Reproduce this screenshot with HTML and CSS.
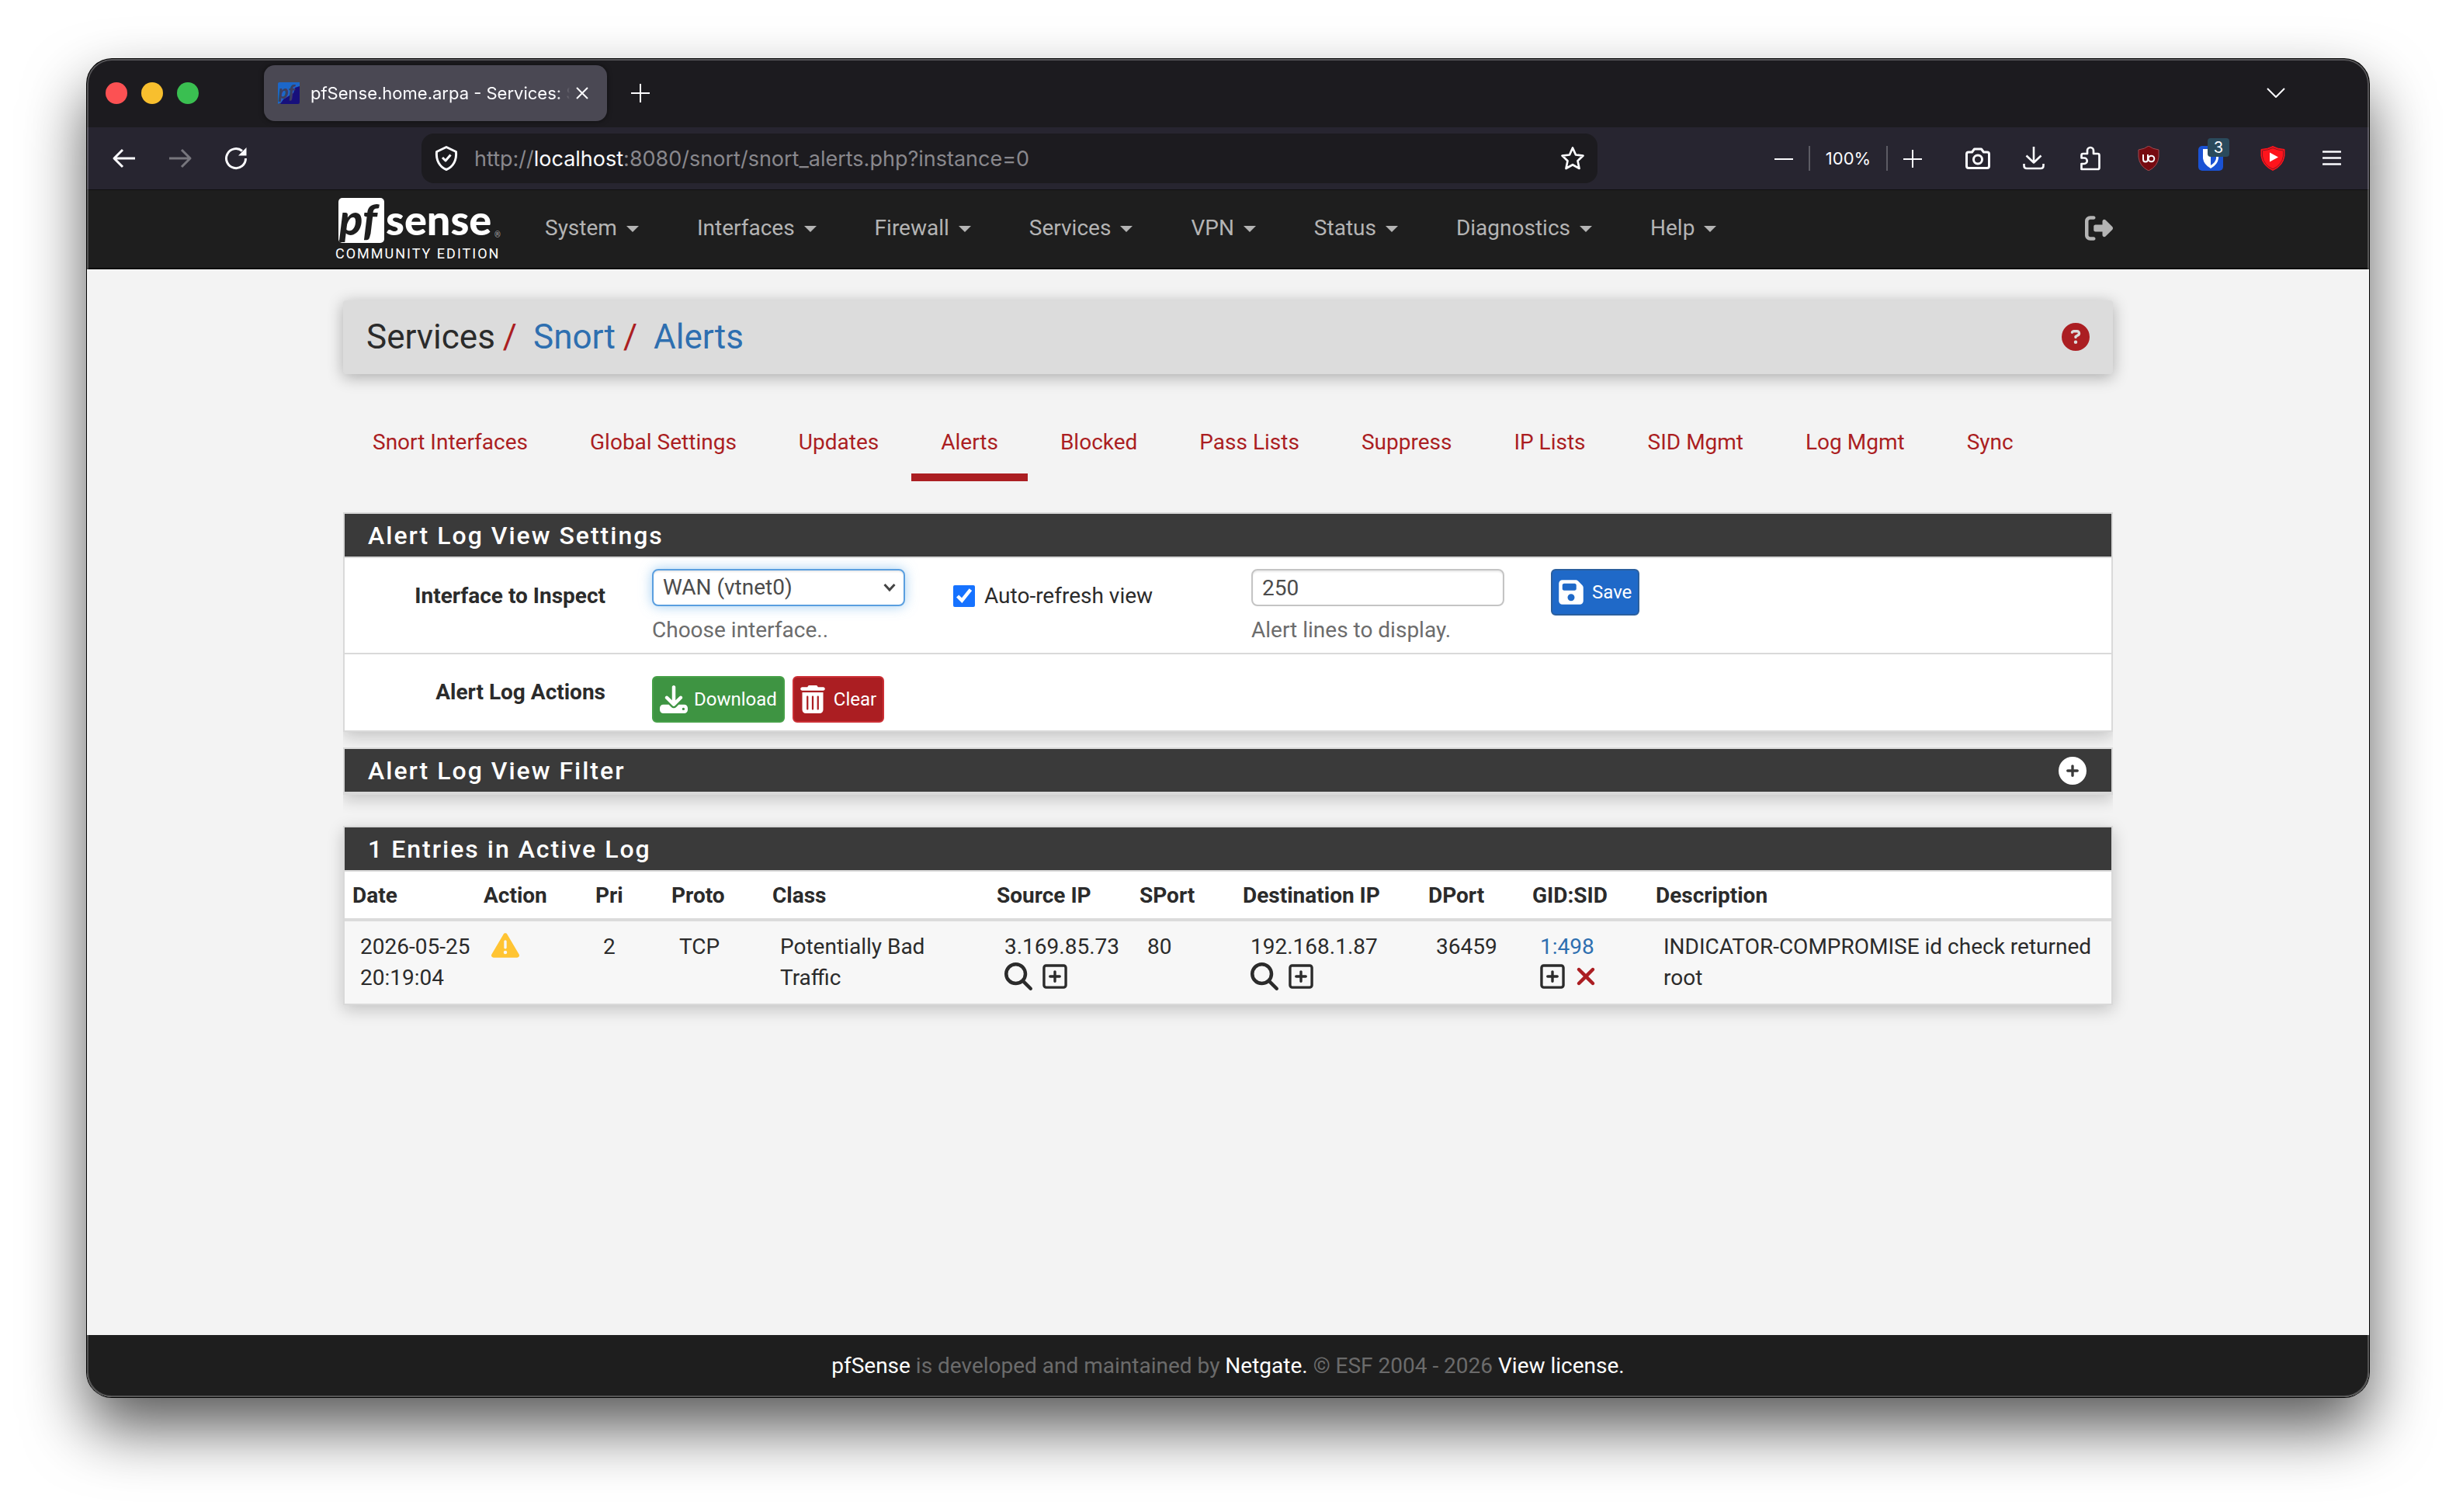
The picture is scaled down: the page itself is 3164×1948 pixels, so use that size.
FILE: index.html
```html
<!DOCTYPE html>
<html lang="en">
<head>
<meta charset="utf-8">
<meta name="viewport" content="width=device-width, initial-scale=1">
<title>pfSense.home.arpa - Services: Snort: Alerts</title>
<link rel="stylesheet" href="styles.css">
</head>
<body>
<svg class="sprite" aria-hidden="true">
  <symbol id="i-search" viewBox="0 0 512 512"><path d="M416 208c0 45.900-14.900 88.300-40 122.700L502.600 457.400c12.500 12.500 12.500 32.800 0 45.300s-32.800 12.500-45.300 0L330.700 376c-34.400 25.200-76.800 40-122.700 40C93.100 416 0 322.900 0 208S93.100 0 208 0S416 93.100 416 208zM208 352a144 144 0 1 0 0-288 144 144 0 1 0 0 288z"/></symbol>
  <symbol id="i-square-plus" viewBox="0 0 448 512"><path d="M64 80c-8.800 0-16 7.200-16 16V416c0 8.800 7.200 16 16 16H384c8.800 0 16-7.200 16-16V96c0-8.800-7.200-16-16-16H64zM0 96C0 60.700 28.700 32 64 32H384c35.300 0 64 28.700 64 64V416c0 35.300-28.700 64-64 64H64c-35.300 0-64-28.700-64-64V96zM200 344V280H136c-13.300 0-24-10.700-24-24s10.700-24 24-24h64V168c0-13.300 10.700-24 24-24s24 10.700 24 24v64h64c13.300 0 24 10.700 24 24s-10.700 24-24 24H248v64c0 13.300-10.700 24-24 24s-24-10.700-24-24z"/></symbol>
</svg>

<div class="window">
  <div class="tabstrip">
    <div class="lights"><span class="light red"></span><span class="light yellow"></span><span class="light green"></span></div>
    <div class="tab">
      <svg class="favicon" viewBox="0 0 28 28" aria-hidden="true">
        <path fill="#1c67c9" d="M2 0H28V6L22 12 8 24 0 28V2Q0 0 2 0Z"/>
        <path fill="#17107c" d="M28 5V26Q28 28 26 28H3L7 22 20 14 22 7Z"/>
        <text x="1" y="21" class="fav-text">pf</text>
      </svg>
      <span class="tab-title">pfSense.home.arpa - Services: Snort: Alerts</span>
      <button class="icon-btn tab-close" aria-label="Close tab"><svg width="16" height="16" viewBox="0 0 16 16"><path d="M1 1 15 15M15 1 1 15"/></svg></button>
    </div>
    <button class="icon-btn new-tab" aria-label="New tab"><svg width="24" height="24" viewBox="0 0 24 24"><path d="M12 0V24M0 12H24"/></svg></button>
    <button class="icon-btn list-tabs" aria-label="List all tabs"><svg width="24" height="14" viewBox="0 0 24 14"><path d="M1 1 12 12 23 1"/></svg></button>
  </div>

  <div class="toolbar">
    <div class="history">
      <button class="icon-btn nav-btn" aria-label="Back"><svg width="32" height="32" viewBox="0 0 32 32"><path d="M3 16H30M14 5 3 16 14 27" stroke-width="3"/></svg></button>
      <button class="icon-btn nav-btn dim" aria-label="Forward"><svg width="32" height="32" viewBox="0 0 32 32"><path d="M29 16H2M18 5 29 16 18 27" stroke-width="3"/></svg></button>
      <button class="icon-btn nav-btn" aria-label="Reload"><svg width="32" height="32" viewBox="0 0 32 32"><path d="M24 6.500A12.500 12.500 0 1 0 28.500 16" stroke-width="3"/><path d="M29.500 2V12.500H19Z" fill="currentColor" stroke="none"/></svg></button>
    </div>
    <div class="address">
      <svg width="32" height="34" viewBox="0 0 32 34" aria-hidden="true"><path d="M16 2.500 28.500 8.500C29.500 19 25 28 16 31.500 7 28 2.500 19 3.500 8.500Z" stroke-width="3"/><path d="M11 16 15 20 21.500 12.500" stroke-width="3"/></svg>
      <span class="url">http://<b>localhost</b>:8080/snort/snort_alerts.php?instance=0</span>
      <button class="icon-btn star" aria-label="Bookmark"><svg width="32" height="32" viewBox="0 0 32 32"><path d="M16 2.500 20 11.500 29.500 12.600 22.500 19.200 24.500 29 16 24.200 7.500 29 9.500 19.200 2.500 12.600 12 11.500Z" stroke-width="2.700"/></svg></button>
    </div>
    <div class="tools">
      <div class="zoom">
        <button class="icon-btn zoom-btn" aria-label="Zoom out"><svg width="24" height="24" viewBox="0 0 24 24"><path d="M0 13H24"/></svg></button>
        <button class="zoom-level">100%</button>
        <button class="icon-btn zoom-btn" aria-label="Zoom in"><svg width="24" height="24" viewBox="0 0 24 24"><path d="M0 13H24M12 1V24"/></svg></button>
      </div>
      <button class="icon-btn tool" aria-label="Screenshot"><svg width="32" height="32" viewBox="0 0 32 32"><path d="M4 8H8.500L11.500 4H20.500L23.500 8H28Q30.500 8 30.500 10.500V26Q30.500 28.500 28 28.500H4Q1.500 28.500 1.500 26V10.500Q1.500 8 4 8Z" stroke-width="3"/><circle cx="16" cy="17.500" r="5.500" stroke-width="3"/></svg></button>
      <button class="icon-btn tool" aria-label="Downloads"><svg width="32" height="32" viewBox="0 0 32 32"><path d="M16 1V21M6.500 12.500 16 21.500 25.500 12.500M3.500 23V25.500Q3.500 29 7 29H25Q28.500 29 28.500 25.500V23" stroke-width="2.600"/></svg></button>
      <button class="icon-btn tool" aria-label="Extensions"><svg width="32" height="32" viewBox="0 0 32 32"><path d="M6 30H26.500Q28.500 30 28.500 28V12Q28.500 10 26.500 10H21V6A4 4 0 0 0 13 6V10H7.500Q5.500 10 5.500 12V15.500H9A3.600 3.600 0 0 1 9 23H5.500V30Z" stroke-width="2.700"/></svg></button>
      <button class="icon-btn tool ext" aria-label="uBlock Origin"><svg width="32" height="32" viewBox="0 0 32 32"><path d="M16 0Q21 4 29 5V14Q28 26 16 32 4 26 3 14V5Q11 4 16 0Z" fill="#760a10" stroke="#a04a50" stroke-width="1"/><path d="M9 11V17Q9 20.500 12 20.500T15 17.500V11" stroke-width="2"/><circle cx="19.500" cy="16.500" r="3.800" stroke-width="2"/></svg></button>
      <button class="icon-btn tool ext" aria-label="Bitwarden"><svg width="32" height="32" viewBox="0 0 32 32"><rect width="32" height="32" rx="5" fill="#1a52d4" stroke="none"/><path d="M6 4H26V16Q25 24 16 29 7 24 6 16Z" fill="#fff" stroke="none"/><path d="M16 7H23V16Q22.500 21 16 25Z" fill="#1a52d4" stroke="none"/></svg><span class="badge">3</span></button>
      <button class="icon-btn tool ext" aria-label="Video enhancer"><svg width="32" height="32" viewBox="0 0 32 32"><path d="M16 .5Q22 4 31 4.500V13Q29 26 16 31.500 3 26 1 13V4.500Q10 4 16 .5Z" fill="#fe141c" stroke="#fe141c" stroke-width="1"/><path d="M16 2.500Q22 5.500 29.500 6V13Q27.500 25 16 29.800 4.500 25 2.500 13V6Q10 5.500 16 2.500Z" stroke="#8f1420" stroke-width="1"/><path d="M12 8.500 23 14.500 12 20.500Z" fill="#fff" stroke="none"/></svg></button>
      <button class="icon-btn tool" aria-label="Menu"><svg width="24" height="24" viewBox="0 0 24 24"><path d="M1 3.500H23M1 11.500H23M1 19.500H23" stroke-width="2.600" stroke-linecap="round"/></svg></button>
    </div>
  </div>

  <div class="page">
    <header class="navbar">
      <div class="navbar-inner">
        <a href="#" class="logo" aria-label="pfSense Community Edition">
          <svg width="216" height="90" viewBox="0 0 216 90">
            <clipPath id="mark"><rect x="6" y="6" width="59" height="58" rx="5"/></clipPath>
            <g clip-path="url(#mark)"><rect x="6" y="6" width="59" height="58" fill="#fff"/><text class="logo-pf" x="7" y="54">pf</text></g>
            <text class="logo-sense" x="67" y="54">sense</text>
            <text class="logo-reg" x="207" y="57">®</text>
            <text class="logo-ce" x="2" y="84">COMMUNITY EDITION</text>
          </svg>
        </a>
        <nav class="menu">
          <a href="#">System<i class="caret"></i></a>
          <a href="#">Interfaces<i class="caret"></i></a>
          <a href="#">Firewall<i class="caret"></i></a>
          <a href="#">Services<i class="caret"></i></a>
          <a href="#">VPN<i class="caret"></i></a>
          <a href="#">Status<i class="caret"></i></a>
          <a href="#">Diagnostics<i class="caret"></i></a>
          <a href="#">Help<i class="caret"></i></a>
        </nav>
        <a href="#" class="logout" aria-label="Log out"><svg width="36" height="36" viewBox="0 0 512 512"><path d="M377.900 105.900L500.700 228.700c7.200 7.200 11.300 17.100 11.300 27.300s-4.100 20.100-11.300 27.300L377.900 406.100c-6.400 6.400-15 9.900-24 9.900c-18.700 0-33.900-15.200-33.900-33.900l0-62.100-128 0c-17.700 0-32-14.300-32-32l0-64c0-17.700 14.300-32 32-32l128 0 0-62.100c0-18.700 15.200-33.900 33.900-33.900c9 0 17.600 3.600 24 9.900zM160 96L96 96c-17.700 0-32 14.300-32 32l0 256c0 17.700 14.300 32 32 32l64 0c17.700 0 32 14.300 32 32s-14.300 32-32 32l-64 0c-53 0-96-43-96-96L0 128C0 75 43 32 96 32l64 0c17.700 0 32 14.300 32 32s-14.300 32-32 32z"/></svg></a>
      </div>
    </header>

    <main class="container">
      <div class="page-header">
        <h1 class="crumbs"><span>Services</span><span class="slash">/</span><a href="#">Snort</a><span class="slash">/</span><a href="#">Alerts</a></h1>
        <a href="#" class="help" aria-label="Help"><svg width="36" height="36" viewBox="0 0 512 512"><path d="M256 512A256 256 0 1 0 256 0a256 256 0 1 0 0 512zM169.800 165.300c7.900-22.300 29.100-37.300 52.800-37.300h58.300c34.900 0 63.100 28.300 63.100 63.100c0 22.600-12.100 43.500-31.700 54.800L280 264.400c-.2 13-10.900 23.600-24 23.600c-13.300 0-24-10.700-24-24V250.500c0-8.600 4.600-16.500 12.100-20.800l44.300-25.400c4.700-2.700 7.600-7.700 7.600-13.100c0-8.400-6.800-15.100-15.100-15.100H222.600c-3.400 0-6.400 2.100-7.500 5.300l-.4 1.200c-4.400 12.500-18.200 19-30.600 14.600s-19-18.200-14.600-30.600l.4-1.200zM224 352a32 32 0 1 1 64 0 32 32 0 1 1 -64 0z"/></svg></a>
      </div>

      <nav class="tabs">
        <a href="#">Snort Interfaces</a>
        <a href="#">Global Settings</a>
        <a href="#">Updates</a>
        <a href="#" class="active">Alerts</a>
        <a href="#">Blocked</a>
        <a href="#">Pass Lists</a>
        <a href="#">Suppress</a>
        <a href="#">IP Lists</a>
        <a href="#">SID Mgmt</a>
        <a href="#">Log Mgmt</a>
        <a href="#">Sync</a>
      </nav>

      <form class="panel clipped">
        <h2 class="panel-title">Alert Log View Settings</h2>
        <div class="form-row settings">
          <label class="row-label" for="instance">Interface to Inspect</label>
          <div class="field">
            <div class="select">
              <select id="instance" aria-describedby="instance-help"><option>WAN (vtnet0)</option></select>
              <svg width="16" height="12" viewBox="0 0 16 12" aria-hidden="true"><path d="M1.500 2 8 9 14.500 2"/></svg>
            </div>
            <span class="help-text" id="instance-help">Choose interface..</span>
          </div>
          <label class="check"><input type="checkbox" checked>Auto-refresh view</label>
          <div class="field">
            <input class="text" type="text" value="250" aria-labelledby="lines-help">
            <span class="help-text" id="lines-help">Alert lines to display.</span>
          </div>
          <div class="buttons">
            <button type="button" class="btn save"><svg width="32" height="36" viewBox="0 0 448 512"><path d="M64 32C28.700 32 0 60.700 0 96V416c0 35.300 28.700 64 64 64H384c35.300 0 64-28.700 64-64V173.300c0-17-6.700-33.300-18.700-45.300L352 50.700C340 38.700 323.700 32 306.700 32H64zm0 96c0-17.700 14.300-32 32-32H288c17.700 0 32 14.300 32 32v64c0 17.700-14.300 32-32 32H96c-17.700 0-32-14.300-32-32V128zM224 288a64 64 0 1 1 0 128 64 64 0 1 1 0-128z"/></svg>Save</button>
          </div>
        </div>
        <div class="form-row actions">
          <span class="row-label">Alert Log Actions</span>
          <div class="buttons">
            <button type="button" class="btn download"><svg width="36" height="36" viewBox="0 0 512 512"><path d="M288 32c0-17.700-14.300-32-32-32s-32 14.300-32 32V274.700l-73.400-73.400c-12.500-12.500-32.800-12.500-45.300 0s-12.500 32.800 0 45.300l128 128c12.500 12.500 32.800 12.500 45.300 0l128-128c12.500-12.500 12.500-32.800 0-45.300s-32.800-12.500-45.300 0L288 274.700V32zM64 352c-35.300 0-64 28.700-64 64v32c0 35.300 28.700 64 64 64H448c35.300 0 64-28.700 64-64V416c0-35.300-28.700-64-64-64H346.500l-45.300 45.300c-25 25-65.500 25-90.500 0L165.500 352H64zm368 56a24 24 0 1 1 0 48 24 24 0 1 1 0-48z"/></svg>Download</button>
            <button type="button" class="btn clear"><svg width="32" height="36" viewBox="0 0 448 512"><path d="M135.200 17.700C140.600 6.800 151.700 0 163.800 0H284.200c12.100 0 23.200 6.800 28.600 17.700L320 32h96c17.700 0 32 14.300 32 32s-14.300 32-32 32H32C14.300 96 0 81.700 0 64S14.300 32 32 32h96l7.200-14.300zM32 128H416V448c0 35.300-28.700 64-64 64H96c-35.300 0-64-28.700-64-64V128zm96 64c-8.800 0-16 7.200-16 16V432c0 8.800 7.200 16 16 16s16-7.200 16-16V208c0-8.800-7.200-16-16-16zm96 0c-8.800 0-16 7.200-16 16V432c0 8.800 7.200 16 16 16s16-7.200 16-16V208c0-8.800-7.200-16-16-16zm96 0c-8.800 0-16 7.200-16 16V432c0 8.800 7.200 16 16 16s16-7.200 16-16V208c0-8.800-7.200-16-16-16z"/></svg>Clear</button>
          </div>
        </div>
      </form>

      <section class="panel clipped">
        <h2 class="panel-title">Alert Log View Filter
          <button class="expand" aria-label="Expand filter"><svg width="36" height="36" viewBox="0 0 512 512"><path d="M256 512A256 256 0 1 0 256 0a256 256 0 1 0 0 512zM232 344V280H168c-13.300 0-24-10.700-24-24s10.700-24 24-24h64V168c0-13.300 10.700-24 24-24s24 10.700 24 24v64h64c13.300 0 24 10.700 24 24s-10.700 24-24 24H280v64c0 13.300-10.700 24-24 24s-24-10.700-24-24z"/></svg></button>
        </h2>
      </section>

      <section class="panel log">
        <h2 class="panel-title">1 Entries in Active Log</h2>
        <table>
          <colgroup><col class="c-date"><col class="c-action"><col class="c-pri"><col class="c-proto"><col class="c-class"><col class="c-src"><col class="c-sport"><col class="c-dst"><col class="c-dport"><col class="c-sid"><col></colgroup>
          <thead>
            <tr><th>Date</th><th>Action</th><th>Pri</th><th>Proto</th><th>Class</th><th>Source IP</th><th>SPort</th><th>Destination IP</th><th>DPort</th><th>GID:SID</th><th>Description</th></tr>
          </thead>
          <tbody>
            <tr>
              <td>2026-05-25<br>20:19:04</td>
              <td><svg class="warn" width="36" height="36" viewBox="0 0 512 512" role="img" aria-label="Alert"><path d="M256 32c14.200 0 27.300 7.500 34.500 19.800l216 368c7.300 12.400 7.300 27.700 .2 40.100S486.300 480 472 480H40c-14.300 0-27.600-7.700-34.700-20.100s-7-27.800 .2-40.100l216-368C228.700 39.500 241.800 32 256 32zm0 128c-13.300 0-24 10.700-24 24V296c0 13.300 10.700 24 24 24s24-10.700 24-24V184c0-13.300-10.700-24-24-24zm32 224a32 32 0 1 0 -64 0 32 32 0 1 0 64 0z"/></svg></td>
              <td>2</td>
              <td>TCP</td>
              <td>Potentially Bad Traffic</td>
              <td>3.169.85.73<span class="row-icons"><a href="#" aria-label="Resolve host"><svg width="36" height="36"><use href="#i-search"/></svg></a><a href="#" aria-label="Add to suppress list"><svg width="32" height="36"><use href="#i-square-plus"/></svg></a></span></td>
              <td>80</td>
              <td>192.168.1.87<span class="row-icons"><a href="#" aria-label="Resolve host"><svg width="36" height="36"><use href="#i-search"/></svg></a><a href="#" aria-label="Add to suppress list"><svg width="32" height="36"><use href="#i-square-plus"/></svg></a></span></td>
              <td>36459</td>
              <td><a href="#">1:498</a><span class="row-icons"><a href="#" aria-label="Suppress rule"><svg width="32" height="36"><use href="#i-square-plus"/></svg></a><a href="#" class="remove" aria-label="Disable rule"><svg width="28" height="36" viewBox="0 0 384 512"><path d="M342.600 150.600c12.500-12.500 12.500-32.800 0-45.300s-32.800-12.500-45.300 0L192 210.700 86.600 105.400c-12.500-12.500-32.800-12.500-45.300 0s-12.500 32.800 0 45.300L146.700 256 41.400 361.400c-12.500 12.500-12.500 32.800 0 45.300s32.800 12.500 45.300 0L192 301.300 297.400 406.600c12.500 12.500 32.800 12.500 45.300 0s12.500-32.800 0-45.300L237.300 256 342.600 150.600z"/></svg></a></span></td>
              <td>INDICATOR-COMPROMISE id check returned root</td>
            </tr>
          </tbody>
        </table>
      </section>
    </main>

    <footer class="footer"><p><a href="#">pfSense</a> is developed and maintained by <a href="#">Netgate.</a> © ESF 2004 - 2026 <a href="#">View license.</a></p></footer>
  </div>
</div>
</body>
</html>
```

FILE: styles.css
```css
*, *::before, *::after { box-sizing: border-box; }

body {
  margin: 0;
  min-height: 100vh;
  padding: 76px 112px 148px;
  display: flex;
  background: #fff;
  color: #2b2b2b;
  font: 28px/40px Roboto, "Liberation Sans", sans-serif;
}

a { color: #2e6fb0; text-decoration: none; }
button { font: inherit; color: inherit; cursor: pointer; }
svg { display: block; flex: none; }
.sprite { position: absolute; width: 0; height: 0; }

/* Browser window */
.window {
  position: relative;
  flex: 1;
  min-width: 0;
  display: flex;
  flex-direction: column;
  overflow: hidden;
  border-radius: 32px;
  background: #1c1b1f;
  box-shadow: 0 0 0 1px #000, 0 40px 80px rgba(0, 0, 0, .65);
}
.window::after {
  content: "";
  position: absolute;
  inset: 0;
  border: 2px solid rgba(255, 255, 255, .25);
  border-radius: 32px;
  pointer-events: none;
}

.icon-btn {
  display: flex;
  align-items: center;
  justify-content: center;
  padding: 0;
  border: 0;
  background: none;
  color: #fbfbfe;
}
.icon-btn svg, .address > svg {
  fill: none;
  stroke: currentColor;
  stroke-width: 2;
  stroke-linejoin: round;
}

.tabstrip {
  display: flex;
  align-items: center;
  height: 88px;
  padding: 0 96px 0 24px;
  font-family: Inter, "Liberation Sans", sans-serif;
}
.lights { display: flex; gap: 18px; margin-right: 84px; }
.light { width: 28px; height: 28px; border-radius: 50%; }
.red { background: #fc5153; }
.yellow { background: #f8bf2e; }
.green { background: #3abf51; }

.tab {
  display: flex;
  align-items: center;
  width: 442px;
  height: 72px;
  padding: 0 16px 0 18px;
  border-radius: 14px;
  background: #4a4853;
  box-shadow: 0 0 6px rgba(0, 0, 0, .5);
  color: #fbfbfe;
}
.favicon { width: 28px; height: 28px; margin-right: 14px; }
.fav-text { font: italic 900 24px Lato, sans-serif; fill: #3d3f60; }
.tab-title {
  flex: 1;
  overflow: hidden;
  white-space: nowrap;
  font-size: 22px;
  mask-image: linear-gradient(to right, #000 95%, transparent);
}
.tab-close { width: 32px; height: 32px; }
.new-tab { width: 64px; height: 64px; margin-left: 11px; }
.list-tabs { width: 48px; height: 48px; margin-left: auto; }

.toolbar {
  display: flex;
  align-items: center;
  height: 81px;
  border-bottom: 1px solid #0f0f11;
  background: #272530;
  font-family: Inter, "Liberation Sans", sans-serif;
}
.history { display: flex; width: 431px; padding-left: 12px; }
.nav-btn { width: 72px; height: 64px; }
.dim { color: #77767d; }
.address {
  flex: 1;
  display: flex;
  align-items: center;
  height: 64px;
  padding: 0 16px;
  border-radius: 16px;
  background: #1c1b1f;
  color: #fbfbfe;
}
.url { flex: 1; padding: 2px 0 0 20px; color: #89888d; font-size: 27px; }
.url b { color: #fbfbfe; font-weight: 400; }
.tools {
  display: flex;
  align-items: center;
  justify-content: flex-end;
  width: 994px;
  padding-right: 12px;
}
.zoom { display: flex; align-items: center; margin-right: 16px; }
.zoom-btn { width: 64px; height: 32px; }
.zoom-level {
  width: 102px;
  height: 32px;
  padding: 0;
  border: solid #5c5b64;
  border-width: 0 2px;
  background: none;
  color: #fbfbfe;
  font-size: 22px;
  line-height: 32px;
}
.tool { position: relative; width: 72px; height: 64px; }
.ext { width: 80px; }
.badge {
  position: absolute;
  top: 6px;
  left: 36px;
  width: 28px;
  height: 24px;
  border-radius: 4px;
  background: #2a4a5c;
  font-size: 20px;
  line-height: 24px;
}

/* Page */
.page {
  flex: 1;
  display: flex;
  flex-direction: column;
  background: #f3f3f3;
}
.navbar { border-bottom: 2px solid #0a0a0a; background: #1e1e1e; }
.navbar-inner {
  display: flex;
  align-items: center;
  width: 100%;
  max-width: 2304px;
  height: 100px;
  margin: 0 auto;
  padding: 0 12px 2px 0;
}
.logo { margin-right: 18px; }
.logo-pf { font: italic 900 56px Lato, sans-serif; fill: #1e1e1e; }
.logo-sense { font: 900 54px Lato, sans-serif; fill: #fff; }
.logo-reg { font: 10px Roboto, sans-serif; fill: #aaa; }
.logo-ce { font: 400 18px Roboto, sans-serif; letter-spacing: 2px; fill: #fff; }
.menu { display: flex; flex: 1; }
.menu a { display: flex; align-items: center; padding: 0 37px 0 38px; color: #b4b4b4; }
.caret {
  margin: 2px 0 0 12px;
  border: 8px solid transparent;
  border-top-color: currentColor;
  border-bottom: 0;
}
.logout svg { fill: #b4b4b4; }

.container {
  flex: 1;
  width: 100%;
  max-width: 2280px;
  margin: 0 auto;
}
.page-header {
  display: flex;
  align-items: center;
  justify-content: space-between;
  margin-top: 40px;
  padding: 23px 30px 24px;
  border-radius: 4px;
  background: #dcdcdc;
  box-shadow: 0 4px 20px rgba(0, 0, 0, .3);
}
.crumbs {
  display: flex;
  margin: 0;
  font-size: 44px;
  font-weight: 400;
  line-height: 48px;
}
.slash { margin: 0 21px 0 10px; color: #ab1e22; }
.help svg { fill: #ab1e22; }

.tabs { display: flex; gap: 4px; margin: 46px 0 40px; }
.tabs a {
  padding: 22px 38px 20px;
  border-bottom: 10px solid transparent;
  color: #ab1e22;
}
.tabs .active { border-color: #ab1e22; }

.panel {
  border: 2px solid #d9d9d9;
  background: #fff;
  box-shadow: 0 6px 20px rgba(0, 0, 0, .2);
}
.panel + .panel { margin-top: 20px; }
.panel + .log { margin-top: 40px; }
.clipped { clip-path: inset(0 0 -40px); }
.panel-title {
  display: flex;
  align-items: center;
  justify-content: space-between;
  height: 57px;
  margin: 0;
  padding: 0 32px 0 30px;
  border-bottom: 2px solid #d9d9d9;
  background: #3a3a3a;
  color: #fff;
  font-size: 32px;
  font-weight: 500;
  letter-spacing: 2px;
}
.expand { padding: 0; border: 0; background: none; }
.expand svg { fill: #fff; }

.form-row {
  display: grid;
  grid-template-columns: 336fr 326fr 326fr 326fr 722fr;
  column-gap: 60px;
  align-items: start;
}
.settings { padding: 14px 0 9px; border-bottom: 2px solid #d9d9d9; }
.actions { padding: 28px 0 10px; }
.row-label { padding-top: 1px; font-weight: 700; text-align: right; }
.settings .row-label, .check { padding-top: 15px; }
.field { display: flex; flex-direction: column; gap: 11px; }
.select { display: grid; align-items: center; }
.select > * { grid-area: 1 / 1; }
.select svg {
  justify-self: end;
  margin-right: 12px;
  fill: none;
  stroke: #444;
  stroke-width: 3;
  pointer-events: none;
}
select, .text {
  width: 100%;
  height: 48px;
  padding: 0 12px;
  border: 2px solid #c4c4c4;
  border-radius: 8px;
  background: #fff;
  box-shadow: inset 0 2px 2px rgba(0, 0, 0, .08);
  color: #4c4c4c;
  font: inherit;
}
select {
  appearance: none;
  border-color: #5a9fe0;
  box-shadow: inset 0 2px 2px rgba(0, 0, 0, .08), 0 0 16px rgba(102, 175, 233, .6);
}
.help-text { color: #6c6c6c; }
.check { display: flex; align-items: center; gap: 12px; }
.check input { width: 28px; height: 28px; margin: 0 0 0 2px; accent-color: #1672ff; }

.buttons { display: flex; gap: 10px; }
.btn {
  display: flex;
  align-items: center;
  gap: 11px;
  height: 60px;
  padding: 0 8px;
  border: 2px solid;
  border-radius: 6px;
  color: #fff;
  font-size: 24px;
}
.btn svg { fill: #fff; }
.save { border-color: #2b5f9e; background: #1f69c8; }
.download { gap: 8px; border-color: #46a048; background: #3e9442; }
.clear { border-color: #cc2f35; background: #ab1e22; }

table { width: 100%; border-collapse: collapse; table-layout: fixed; }
th, td { text-align: left; vertical-align: top; }
th { padding: 11px 10px 9px; font-weight: 700; }
thead tr { border-bottom: 4px solid #dbdbdb; }
td { padding: 13px 4px 13px 20px; }
tbody tr { background: #f7f7f7; }
td a { white-space: nowrap; }
.c-date { width: 169px; }
.c-action { width: 144px; }
.c-pri { width: 98px; }
.c-proto { width: 130px; }
.c-class { width: 289px; }
.c-src { width: 184px; }
.c-sport { width: 133px; }
.c-dst { width: 239px; }
.c-dport { width: 134px; }
.c-sid { width: 159px; }
.warn { fill: #ffc433; }
.row-icons { display: flex; align-items: center; gap: 13px; height: 36px; }
.row-icons svg { fill: #2b2b2b; }
.row-icons .remove svg { fill: #ab1e22; }

.footer {
  padding: 20px;
  background: #1e1e1e;
  color: #6b6b6b;
  text-align: center;
}
.footer p { margin: 0; }
.footer a { color: #fff; }
```
